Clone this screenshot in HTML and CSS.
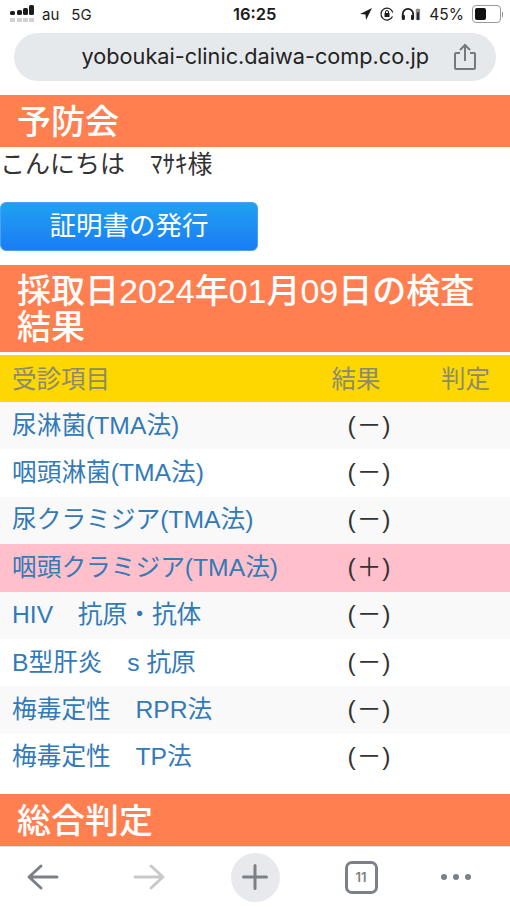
FILE: index.html
```html
<!DOCTYPE html>
<html lang="ja">

<head>
    <meta charset="UTF-8">
    <title>予防会</title>
    <link rel="stylesheet" href="styles.css">
</head>

<body>
    <div class="phone">
        <div class="status-bar">
            <div class="status-left">
                <svg class="signal" width="26" height="20" viewBox="0 0 26 20">
                    <g fill="#d2d2d2">
                        <rect x="1" y="14" width="5" height="4" />
                        <rect x="8" y="14" width="5" height="4" />
                        <rect x="14" y="14" width="5" height="4" />
                        <rect x="20" y="14" width="5" height="4" />
                    </g>
                    <g fill="#1c1c1c">
                        <rect x="1" y="7" width="5" height="4" rx="1.5" />
                        <rect x="8" y="6" width="5" height="5" rx="1.5" />
                        <rect x="14" y="4" width="5" height="7" rx="1.5" />
                        <rect x="20" y="1" width="5" height="10" rx="1.5" />
                    </g>
                </svg>
                <span class="carrier">au</span>
                <span class="carrier">5G</span>
            </div>
            <div class="status-time">16:25</div>
            <div class="status-right">
                <svg class="icon-location" width="14" height="14" viewBox="0 0 14 14">
                    <path d="M13 1 L1 7 L6.5 7.5 L7 13 Z" fill="#1c1c1c" />
                </svg>
                <svg class="icon-rotation" width="16" height="16" viewBox="0 0 16 16">
                    <path d="M13.5 10.5 A6 6 0 1 1 13.8 6.5" fill="none" stroke="#1c1c1c" stroke-width="1.2" />
                    <rect x="5.5" y="7" width="5" height="4" rx="0.6" fill="#1c1c1c" />
                    <path d="M6.5 7 V6 A1.5 1.5 0 0 1 9.5 6 V7" fill="none" stroke="#1c1c1c" stroke-width="1" />
                </svg>
                <svg class="icon-headphones" width="20" height="14" viewBox="0 0 23 16">
                    <path d="M2 13 V8 A6 6 0 0 1 14 8 V13" fill="none" stroke="#1c1c1c" stroke-width="2" />
                    <rect x="1" y="9" width="3.5" height="6" rx="1.5" fill="#1c1c1c" />
                    <rect x="11.5" y="9" width="3.5" height="6" rx="1.5" fill="#1c1c1c" />
                    <rect x="17" y="2" width="5" height="13" rx="1" fill="#8c8c8c" />
                    <rect x="18.5" y="6" width="2" height="9" fill="#1c1c1c" />
                </svg>
                <span class="battery-pct">45%</span>
                <div class="battery">
                    <div class="battery-level"></div>
                </div>
                <div class="battery-tip"></div>
            </div>
        </div>

        <div class="url-bar">
            <span class="url-text">yoboukai-clinic.daiwa-comp.co.jp</span>
            <svg class="share-icon" width="24" height="28" viewBox="0 0 24 28">
                <path d="M7 10 H3 Q2 10 2 11 V25 Q2 26 3 26 H21 Q22 26 22 25 V11 Q22 10 21 10 H17" fill="none" stroke="#75797d" stroke-width="2" />
                <path d="M12 18 V3 M7 7 L12 2 L17 7" fill="none" stroke="#75797d" stroke-width="2" />
            </svg>
        </div>

        <div class="content">
            <h1 class="section-title">予防会</h1>
            <p class="greeting">こんにちは　ﾏｻｷ様</p>
            <a class="btn-issue">証明書の発行</a>
            <h2 class="section-title result-title">採取日2024年01月09日の検査結果</h2>

            <table class="result-table">
                <thead>
                    <tr>
                        <th class="col-name">受診項目</th>
                        <th class="col-result">結果</th>
                        <th class="col-judge">判定</th>
                    </tr>
                </thead>
                <tbody>
                    <tr>
                        <td class="col-name"><a>尿淋菌(TMA法)</a></td>
                        <td class="col-result">(－)</td>
                        <td></td>
                    </tr>
                    <tr>
                        <td class="col-name"><a>咽頭淋菌(TMA法)</a></td>
                        <td class="col-result">(－)</td>
                        <td></td>
                    </tr>
                    <tr>
                        <td class="col-name"><a>尿クラミジア(TMA法)</a></td>
                        <td class="col-result">(－)</td>
                        <td></td>
                    </tr>
                    <tr class="positive">
                        <td class="col-name"><a>咽頭クラミジア(TMA法)</a></td>
                        <td class="col-result">(＋)</td>
                        <td></td>
                    </tr>
                    <tr>
                        <td class="col-name"><a>HIV　抗原・抗体</a></td>
                        <td class="col-result">(－)</td>
                        <td></td>
                    </tr>
                    <tr>
                        <td class="col-name"><a>B型肝炎　s 抗原</a></td>
                        <td class="col-result">(－)</td>
                        <td></td>
                    </tr>
                    <tr>
                        <td class="col-name"><a>梅毒定性　RPR法</a></td>
                        <td class="col-result">(－)</td>
                        <td></td>
                    </tr>
                    <tr>
                        <td class="col-name"><a>梅毒定性　TP法</a></td>
                        <td class="col-result">(－)</td>
                        <td></td>
                    </tr>
                </tbody>
            </table>

            <h2 class="section-title">総合判定</h2>
        </div>

        <div class="bottom-nav">
            <svg width="34" height="30" viewBox="0 0 34 30">
                <path d="M31 15 H4 M15 4 L3 15 L15 26" fill="none" stroke="#7b8186" stroke-width="3" stroke-linecap="round" stroke-linejoin="round" />
            </svg>
            <svg width="34" height="30" viewBox="0 0 34 30">
                <path d="M3 15 H30 M19 4 L31 15 L19 26" fill="none" stroke="#c9c9c9" stroke-width="3" stroke-linecap="round" stroke-linejoin="round" />
            </svg>
            <div class="nav-plus">
                <svg width="26" height="26" viewBox="0 0 26 26">
                    <path d="M1.5 13 H24.5 M13 1.5 V24.5" fill="none" stroke="#7b8186" stroke-width="3" stroke-linecap="round" />
                </svg>
            </div>
            <div class="nav-tabs">11</div>
            <div class="nav-more">
                <span></span><span></span><span></span>
            </div>
        </div>
    </div>
</body>

</html>
```

FILE: styles.css
```css
/* general */
html,
body {
    margin: 0;
    padding: 0;
    background-color: #fff;
}

body {
    font-family: "Liberation Sans", "Noto Sans CJK JP", sans-serif;
    color: #333;
}

.phone {
    display: flex;
    flex-direction: column;
    width: 510px;
    height: 907px;
    overflow: hidden;
}

/* status bar */
.status-bar {
    display: flex;
    align-items: center;
    justify-content: space-between;
    height: 28px;
    padding: 0 9px;
    font-family: Inter, sans-serif;
    font-size: 15px;
    color: #1c1c1c;
    position: relative;
    flex-shrink: 0;
}

.status-left,
.status-right {
    display: flex;
    align-items: center;
}

.signal {
    margin-right: 7px;
}

.carrier {
    margin-right: 12px;
}

.status-time {
    position: absolute;
    left: 233px;
    font-size: 16.5px;
    font-weight: 600;
}

.status-right {
    margin-right: -2px;
}

.icon-location {
    margin-right: 6px;
}

.icon-rotation {
    margin-right: 6px;
}

.icon-headphones {
    margin-right: 8px;
}

.battery-pct {
    font-size: 15.5px;
    margin-right: 8px;
}

.battery {
    width: 23px;
    height: 12px;
    padding: 2px;
    border: 1px solid #9a9a9a;
    border-radius: 4px;
}

.battery-level {
    width: 11px;
    height: 100%;
    background-color: #111;
    border-radius: 2px;
}

.battery-tip {
    width: 1px;
    height: 5px;
    margin-left: 1px;
    background-color: #9a9a9a;
}

/* url bar */
.url-bar {
    display: flex;
    align-items: center;
    justify-content: flex-end;
    height: 48px;
    margin: 5px 14px 14px;
    padding-right: 19px;
    background-color: #e6e9ec;
    border-radius: 24px;
    flex-shrink: 0;
}

.url-text {
    font-family: Inter, sans-serif;
    font-size: 21.7px;
    line-height: 46px;
    height: 48px;
    color: #222;
    margin-right: 24px;
}

/* page */
.content {
    flex: 1;
    min-height: 0;
}

.section-title {
    margin: 0;
    padding: 10px 18px 8px 17px;
    background-color: #ff7f50;
    color: #fff;
    font-size: 34px;
    font-weight: 500;
    line-height: 34px;
}

.result-title {
    padding-top: 8px;
    padding-bottom: 7px;
    margin-bottom: 3px;
    line-height: 36px;
}

.greeting {
    margin: 0;
    height: 55px;
    font-size: 25px;
    line-height: 35px;
}

.btn-issue {
    display: block;
    box-sizing: border-box;
    width: 258px;
    height: 49px;
    margin-bottom: 14px;
    background: linear-gradient(#21a1f1, #1a7cf5);
    border: 1px solid #4aa0f5;
    border-radius: 6px;
    color: #fff;
    font-size: 26.5px;
    line-height: 46px;
    text-align: center;
}

/* results table */
.result-table {
    width: 100%;
    margin-bottom: 13px;
    border-collapse: collapse;
    table-layout: fixed;
    font-size: 24.7px;
}

.result-table th {
    box-sizing: border-box;
    height: 47px;
    padding: 0 0 3px;
    background-color: #ffd700;
    color: #8b8b6b;
    font-size: 24.5px;
    font-weight: 400;
}

.result-table td {
    box-sizing: border-box;
    height: 47.4px;
    padding: 0 0 6px;
}

.result-table tbody tr:nth-child(odd) {
    background-color: #f9f9f9;
}

.result-table tbody tr.positive {
    background-color: #ffc0cb;
}

.result-table a {
    color: #337ab7;
}

.result-table .col-name {
    width: 308px;
    padding-left: 12px;
    text-align: left;
}

.result-table .col-result {
    width: 120px;
    text-align: center;
}

.result-table td.col-result {
    padding-left: 3px;
    letter-spacing: 1px;
}

.result-table th.col-result {
    padding-right: 24px;
}

.result-table .col-judge {
    padding-left: 13px;
    text-align: left;
}

/* bottom navigation */
.bottom-nav {
    display: grid;
    grid-template-columns: 86px 126px 86px 126px 64px;
    align-items: center;
    justify-items: center;
    box-sizing: border-box;
    height: 61px;
    border-top: 1px solid #ddd;
    background-color: #fff;
    flex-shrink: 0;
}

.nav-plus {
    display: flex;
    align-items: center;
    justify-content: center;
    width: 49px;
    height: 49px;
    background-color: #e7e9ec;
    border-radius: 50%;
}

.nav-tabs {
    box-sizing: border-box;
    width: 33px;
    height: 33px;
    border: 3px solid #7b8186;
    border-radius: 7px;
    font-family: Inter, sans-serif;
    font-size: 13px;
    font-weight: 600;
    line-height: 27px;
    text-align: center;
    color: #7b8186;
}

.nav-more {
    display: flex;
    gap: 5.5px;
}

.nav-more span {
    width: 6.5px;
    height: 6.5px;
    background-color: #7b8186;
    border-radius: 50%;
}
```
